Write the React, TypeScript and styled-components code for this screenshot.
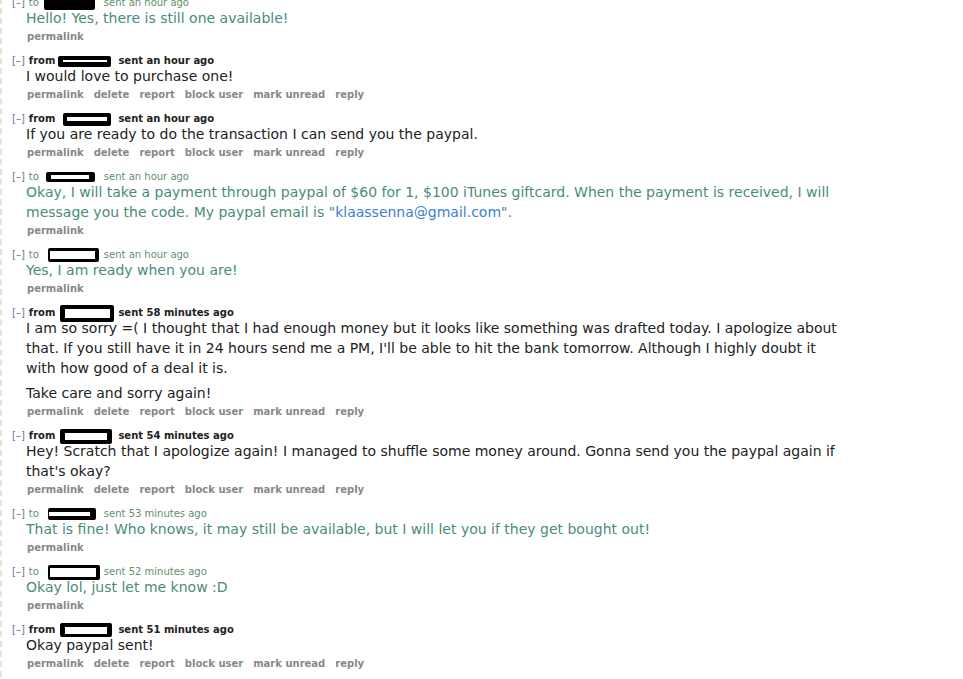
import React from "react";
import styled, { createGlobalStyle } from "styled-components";

const GlobalStyle = createGlobalStyle`
  html, body {
    margin: 0;
    padding: 0;
    background: #ffffff;
  }
  body {
    font-family: "DejaVu Sans", Verdana, sans-serif;
    overflow: hidden;
  }
`;

const Thread = styled.div`
  min-height: 100vh;
  border-left: 2px dashed #e2e2e2;
  margin-top: -2px;
  padding-left: 10px;
  box-sizing: border-box;
`;

const Message = styled.div`
  margin-bottom: 13px;
`;

const Tagline = styled.div<{ $sent: boolean }>`
  display: flex;
  align-items: center;
  height: 10px;
  line-height: 10px;
  font-size: 10px;
  white-space: nowrap;
  color: ${(p) => (p.$sent ? "#5f8f6c" : "#222222")};
  font-weight: ${(p) => (p.$sent ? "normal" : "bold")};
`;

const Expand = styled.span`
  color: #6a6fae;
  font-weight: normal;
  margin-right: 4px;
`;

const Direction = styled.span`
  margin-right: 3px;
`;

/* fixed slot where the author name sits; the censor bar is drawn inside it */
const UserSlot = styled.span<{ $w: number }>`
  display: inline-flex;
  align-items: center;
  width: ${(p) => p.$w}px;
  height: 10px;
  margin-right: 4px;
`;

const Redacted = styled.span<{ $x: number; $w: number; $h: number; $gx: number }>`
  display: inline-flex;
  flex: none;
  align-items: center;
  margin-left: ${(p) => p.$x}px;
  padding-left: ${(p) => p.$gx}px;
  box-sizing: border-box;
  width: ${(p) => p.$w}px;
  height: ${(p) => p.$h}px;
  background: #000000;
  border-radius: 2px;
`;

const RedactedGap = styled.span<{ $w: number; $h: number }>`
  display: block;
  width: ${(p) => p.$w}px;
  height: ${(p) => p.$h}px;
  background: #ffffff;
`;

const Body = styled.div<{ $sent: boolean }>`
  padding-left: 14px;
  max-width: 820px;
  font-size: 14px;
  line-height: 20px;
  color: ${(p) => (p.$sent ? "#4b8b7b" : "#222222")};

  p {
    margin: 0;
  }
  p + p {
    margin-top: 5px;
  }
`;

const Mail = styled.a`
  color: #3b7fcf;
  text-decoration: none;
`;

const Buttons = styled.ul`
  display: flex;
  gap: 10px;
  list-style: none;
  margin: 0;
  padding: 3px 0 0 15px;
  font-size: 10px;
  line-height: 12px;
  font-weight: bold;
  color: #888888;
`;

const Button = styled.li`
  white-space: nowrap;
`;

/* x: page x of the bar's left edge, w/h: bar size, gx/gw/gh: white gap inside */
type Box = { x: number; w: number; h: number; gx: number; gw: number; gh: number };

type Msg = {
  sent: boolean;
  when: string;
  box: Box;
  body: React.ReactNode[];
};

const messages: Msg[] = [
  {
    sent: true,
    when: "sent an hour ago",
    box: { x: 43, w: 51, h: 13, gx: 0, gw: 0, gh: 0 },
    body: ["Hello! Yes, there is still one available!"],
  },
  {
    sent: false,
    when: "sent an hour ago",
    box: { x: 58, w: 53, h: 11, gx: 5, gw: 44, gh: 2 },
    body: ["I would love to purchase one!"],
  },
  {
    sent: false,
    when: "sent an hour ago",
    box: { x: 63, w: 48, h: 13, gx: 4, gw: 40, gh: 4 },
    body: ["If you are ready to do the transaction I can send you the paypal."],
  },
  {
    sent: true,
    when: "sent an hour ago",
    box: { x: 45, w: 49, h: 10, gx: 5, gw: 38, gh: 4 },
    body: [
      <>
        Okay, I will take a payment through paypal of $60 for 1, $100 iTunes
        giftcard. When the payment is received, I will message you the code. My
        paypal email is "<Mail href="#">klaassenna@gmail.com</Mail>".
      </>,
    ],
  },
  {
    sent: true,
    when: "sent an hour ago",
    box: { x: 47, w: 51, h: 14, gx: 2, gw: 45, gh: 8 },
    body: ["Yes, I am ready when you are!"],
  },
  {
    sent: false,
    when: "sent 58 minutes ago",
    box: { x: 60, w: 54, h: 17, gx: 5, gw: 45, gh: 9 },
    body: [
      "I am so sorry =( I thought that I had enough money but it looks like something was drafted today. I apologize about that. If you still have it in 24 hours send me a PM, I'll be able to hit the bank tomorrow. Although I highly doubt it with how good of a deal it is.",
      "Take care and sorry again!",
    ],
  },
  {
    sent: false,
    when: "sent 54 minutes ago",
    box: { x: 60, w: 52, h: 15, gx: 5, gw: 42, gh: 7 },
    body: [
      "Hey! Scratch that I apologize again! I managed to shuffle some money around. Gonna send you the paypal again if that's okay?",
    ],
  },
  {
    sent: true,
    when: "sent 53 minutes ago",
    box: { x: 47, w: 48, h: 12, gx: 1, gw: 41, gh: 4 },
    body: [
      "That is fine! Who knows, it may still be available, but I will let you if they get bought out!",
    ],
  },
  {
    sent: true,
    when: "sent 52 minutes ago",
    box: { x: 47, w: 52, h: 15, gx: 2, gw: 46, gh: 9 },
    body: ["Okay lol, just let me know :D"],
  },
  {
    sent: false,
    when: "sent 51 minutes ago",
    box: { x: 60, w: 52, h: 14, gx: 5, gw: 42, gh: 7 },
    body: ["Okay paypal sent!"],
  },
];

const receivedActions = [
  "permalink",
  "delete",
  "report",
  "block user",
  "mark unread",
  "reply",
];

/* page x where the name slot begins after "to " / "from " */
const slotStart = (sent: boolean) => (sent ? 41 : 58);
const slotWidth = (sent: boolean) => (sent ? 58 : 56);

export default function App() {
  return (
    <>
      <GlobalStyle />
      <Thread>
        {messages.map((m, i) => (
          <Message key={i}>
            <Tagline $sent={m.sent}>
              <Expand>[–]</Expand>
              <Direction>{m.sent ? "to" : "from"}</Direction>
              <UserSlot $w={slotWidth(m.sent)}>
                <Redacted
                  $x={m.box.x - slotStart(m.sent)}
                  $w={m.box.w}
                  $h={m.box.h}
                  $gx={m.box.gx}
                >
                  {m.box.gw > 0 && <RedactedGap $w={m.box.gw} $h={m.box.gh} />}
                </Redacted>
              </UserSlot>
              {m.when}
            </Tagline>
            <Body $sent={m.sent}>
              {m.body.map((para, j) => (
                <p key={j}>{para}</p>
              ))}
            </Body>
            <Buttons>
              {(m.sent ? ["permalink"] : receivedActions).map((a) => (
                <Button key={a}>{a}</Button>
              ))}
            </Buttons>
          </Message>
        ))}
      </Thread>
    </>
  );
}
